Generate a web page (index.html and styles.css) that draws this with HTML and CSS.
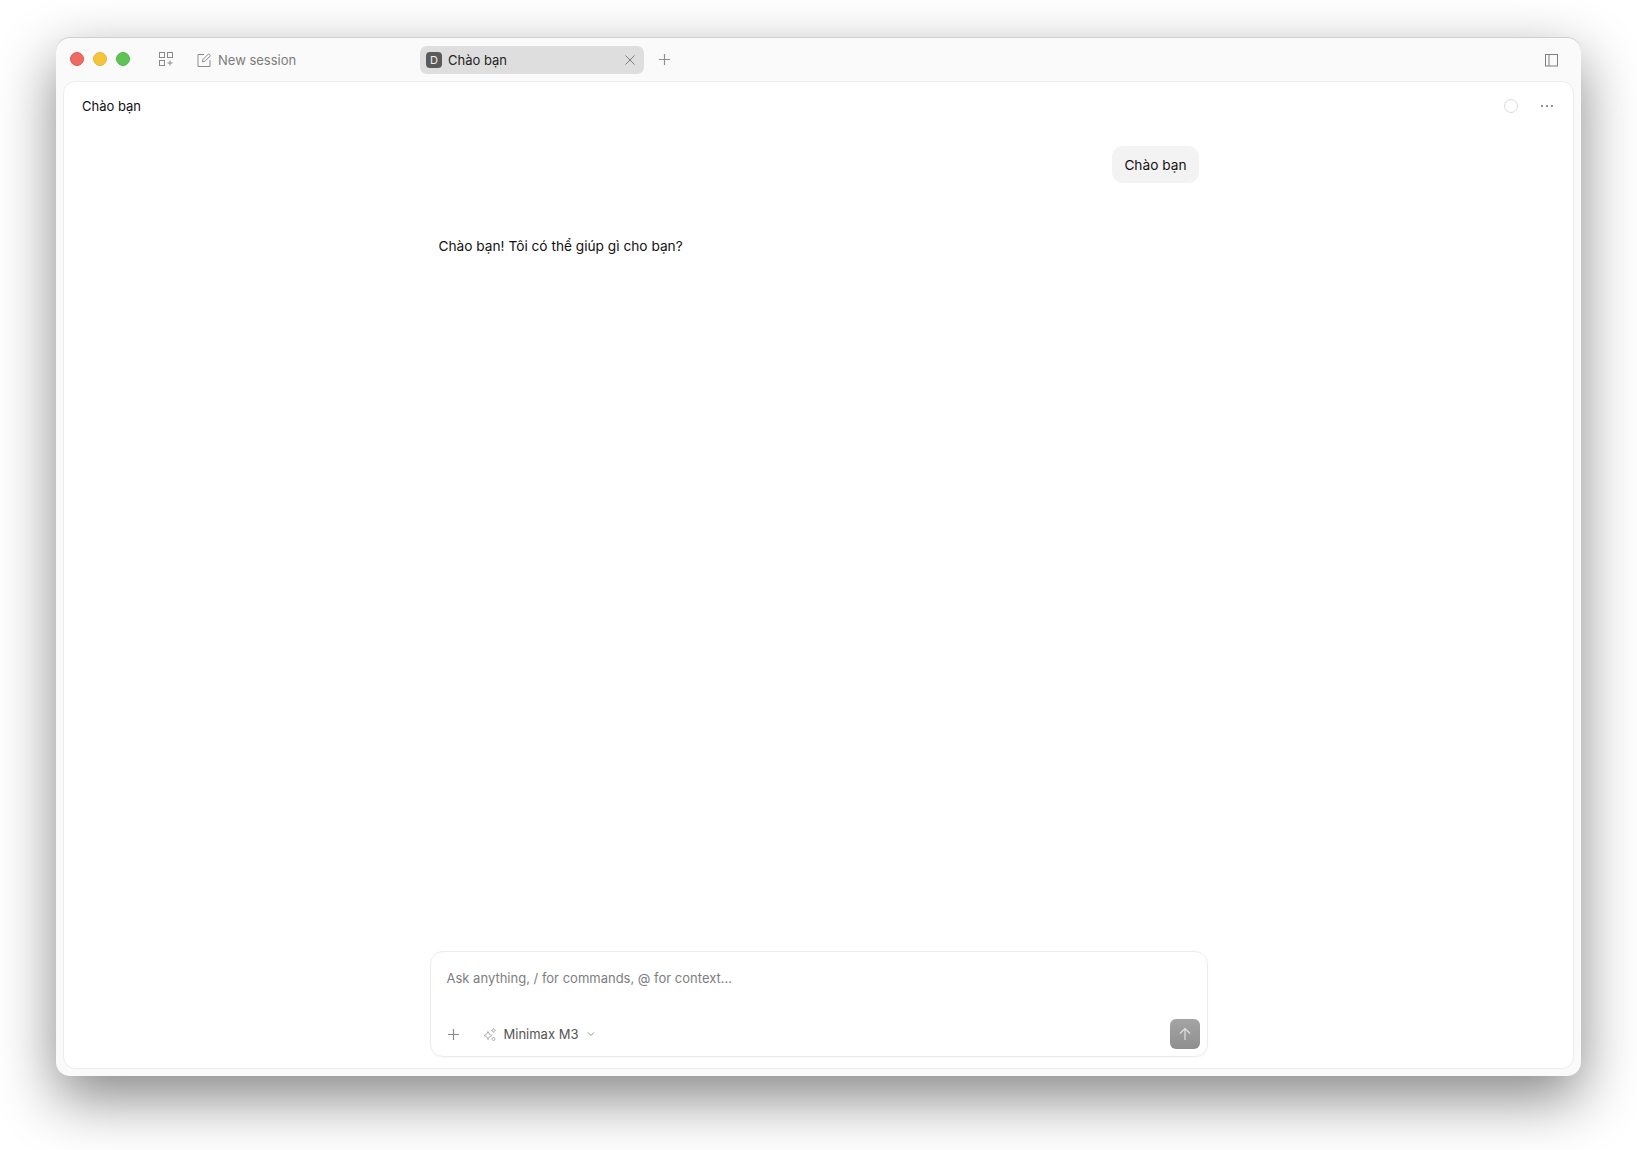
FILE: index.html
```html
<!DOCTYPE html>
<html lang="en">
<head>
    <meta charset="UTF-8">
    <meta name="viewport" content="width=device-width, initial-scale=1.0">
    <title>Chào bạn</title>
    <link rel="stylesheet" href="styles.css">
</head>
<body>
    <div class="window">
        <div class="titlebar">
            <div class="traffic">
                <span class="light red"></span>
                <span class="light yellow"></span>
                <span class="light green"></span>
            </div>
            <svg class="icon grid-icon" width="16" height="16" viewBox="0 0 16 16" fill="none" stroke="#8a8a8a" stroke-width="1">
                <rect x="1.5" y="1.5" width="5" height="5"/>
                <rect x="9.5" y="1.5" width="5" height="5"/>
                <rect x="1.5" y="9.5" width="5" height="5"/>
                <path d="M12 9.5v5M9.5 12h5"/>
            </svg>
            <div class="new-session">
                <svg width="16" height="16" viewBox="0 0 16 16" fill="none" stroke="#8a8a8a" stroke-width="1">
                    <path d="M8 2.5H2v12h12V8"/>
                    <path d="M6.5 9.8l.4-2.3L12.6 1.8l1.9 1.9-5.7 5.7z"/>
                </svg>
                <span>New session</span>
            </div>
            <div class="tab">
                <span class="tab-badge">D</span>
                <span class="tab-title">Chào bạn</span>
                <svg width="12" height="12" viewBox="0 0 12 12" fill="none" stroke="#7d7d7d" stroke-width="1">
                    <path d="M1.5 1.5l9 9M10.500 1.500l-9 9"/>
                </svg>
            </div>
            <svg class="icon tab-add" width="13" height="13" viewBox="0 0 13 13" fill="none" stroke="#8f8f8f" stroke-width="1.2">
                <path d="M6.5 1v11M1 6.5h11"/>
            </svg>
            <svg class="icon sidebar-icon" width="14" height="14" viewBox="0 0 14 14" fill="none" stroke="#7f7f7f" stroke-width="1">
                <rect x="1.500" y="1.500" width="12" height="11.500"/>
                <path d="M5 1.500v11.500"/>
            </svg>
        </div>
        <div class="panel">
            <div class="panel-head">
                <span class="panel-title">Chào bạn</span>
                <div class="panel-actions">
                    <span class="status-ring"></span>
                    <svg width="14" height="4" viewBox="0 0 14 4" fill="#6f6f6f">
                        <rect x="1" y="1" width="2" height="2" rx="1"/>
                        <rect x="6" y="1" width="2" height="2" rx="1"/>
                        <rect x="11" y="1" width="2" height="2" rx="1"/>
                    </svg>
                </div>
            </div>
            <div class="messages">
                <div class="bubble">Chào bạn</div>
                <p class="reply">Chào bạn! Tôi có thể giúp gì cho bạn?</p>
            </div>
            <div class="composer">
                <div class="placeholder">Ask anything, / for commands, @ for context...</div>
                <div class="composer-bar">
                    <svg class="attach" width="13" height="13" viewBox="0 0 13 13" fill="none" stroke="#8a8a8a" stroke-width="1.2">
                        <path d="M6.5 1v11M1 6.5h11"/>
                    </svg>
                    <svg class="spark" width="15" height="15" viewBox="0 0 15 15" fill="none" stroke="#a8a8a8" stroke-width="0.9">
                        <path d="M6 4.500l1.300 2.700L10 8.500 7.300 9.800 6 12.500 4.700 9.800 2 8.500l2.700-1.300z"/>
                        <path d="M11.500 1.500l.7 1.300 1.300.7-1.300.7-.7 1.300-.7-1.300-1.300-.7 1.300-.7z"/>
                        <circle cx="11.500" cy="12" r="1.500"/>
                    </svg>
                    <span class="model">Minimax M3</span>
                    <svg class="chevron" width="8" height="8" viewBox="0 0 8 8" fill="none" stroke="#8a8a8a" stroke-width="1">
                        <path d="M1 2.500l3 3 3-3"/>
                    </svg>
                    <button class="send">
                        <svg width="12" height="14" viewBox="0 0 12 14" fill="none" stroke="#e2e2e2" stroke-width="1.200">
                            <path d="M6 13V1.500M1 6.500l5-5 5 5"/>
                        </svg>
                    </button>
                </div>
            </div>
        </div>
    </div>
</body>
</html>
```
FILE: styles.css
```css
html, body {
    height: 100%;
}
body {
    font-family: Inter, "Noto Sans", sans-serif;
    margin: 0;
    padding: 37px 56px 0;
    box-sizing: border-box;
    background-color: white;
    overflow: hidden;
}
.window {
    height: 1039px;
    box-sizing: border-box;
    background-color: #fafafa;
    border-radius: 14px;
    box-shadow: 0 22px 58px rgba(0, 0, 0, 0.48), inset 0 1px 0 #cfcfcf;
    padding: 0 7px 7px 7px;
    display: flex;
    flex-direction: column;
}
.titlebar {
    height: 44px;
    flex-shrink: 0;
    display: flex;
    align-items: center;
    color: #7c7c7c;
    font-size: 13px;
}
.traffic {
    display: flex;
    gap: 9px;
    margin-left: 7px;
    margin-top: -1px;
}
.light {
    width: 14px;
    height: 14px;
    border-radius: 50%;
    box-sizing: border-box;
}
.red {
    background-color: #ee6a64;
    border: 1px solid #e0574f;
}
.yellow {
    background-color: #f5c33c;
    border: 1px solid #e8b52f;
}
.green {
    background-color: #5fc454;
    border: 1px solid #52b648;
}
.icon {
    flex-shrink: 0;
}
.grid-icon {
    margin-left: 28px;
}
.new-session {
    display: flex;
    align-items: center;
    gap: 6px;
    margin-left: 22px;
    margin-top: 1px;
    width: 224px;
    flex-shrink: 0;
}
.tab {
    width: 224px;
    height: 28px;
    margin-top: 1px;
    box-sizing: border-box;
    background-color: #dedede;
    border-radius: 7px;
    display: flex;
    align-items: center;
    padding: 0 8px 0 6px;
    color: #1f1f1f;
}
.tab-badge {
    width: 16px;
    height: 16px;
    background-color: #5a5a5a;
    color: #f0f0f0;
    border-radius: 4px;
    font-size: 11px;
    display: flex;
    align-items: center;
    justify-content: center;
}
.tab-title {
    margin-left: 6px;
    flex: 1;
}
.tab-add {
    margin-left: 14px;
    margin-top: 1px;
}
.sidebar-icon {
    margin-left: auto;
    margin-right: 16px;
    margin-top: 1px;
}
.panel {
    flex: 1;
    background-color: white;
    border: 1px solid #ececec;
    border-radius: 12px;
    display: flex;
    flex-direction: column;
    min-height: 0;
}
.panel-head {
    height: 47px;
    flex-shrink: 0;
    display: flex;
    align-items: center;
    justify-content: space-between;
    padding: 0 19px 0 18px;
    font-size: 13px;
    color: #111;
}
.panel-actions {
    display: flex;
    align-items: center;
    gap: 22px;
}
.status-ring {
    width: 14px;
    height: 14px;
    box-sizing: border-box;
    border: 1.5px solid #dcdcdc;
    border-radius: 50%;
}
.messages {
    flex: 1;
    width: 760px;
    margin: 0 auto;
    padding-top: 17px;
    font-size: 13.7px;
    color: #111;
    display: flex;
    flex-direction: column;
}
.bubble {
    align-self: flex-end;
    background-color: #f3f3f3;
    border-radius: 11px;
    padding: 10px 12px 9px;
    line-height: 18px;
}
.reply {
    margin: 53px 0 0;
    line-height: 20px;
}
.composer {
    width: 778px;
    height: 106px;
    box-sizing: border-box;
    margin: 0 auto 11px;
    border: 1px solid #ececec;
    border-radius: 13px;
    box-shadow: 0 1px 2px rgba(0, 0, 0, 0.04);
    padding: 17px 7px 7px 16px;
    display: flex;
    flex-direction: column;
}
.placeholder {
    font-size: 13px;
    line-height: 18px;
    color: #7e7e7e;
}
.composer-bar {
    margin-top: auto;
    display: flex;
    align-items: center;
    font-size: 13px;
    color: #555;
}
.spark {
    margin-left: 22px;
}
.model {
    margin-left: 7px;
}
.chevron {
    margin-left: 9px;
}
.send {
    margin-left: auto;
    width: 30px;
    height: 30px;
    padding: 0;
    border: none;
    border-radius: 6px;
    background: linear-gradient(#a4a4a4, #8f8f8f);
    display: flex;
    align-items: center;
    justify-content: center;
}
```
